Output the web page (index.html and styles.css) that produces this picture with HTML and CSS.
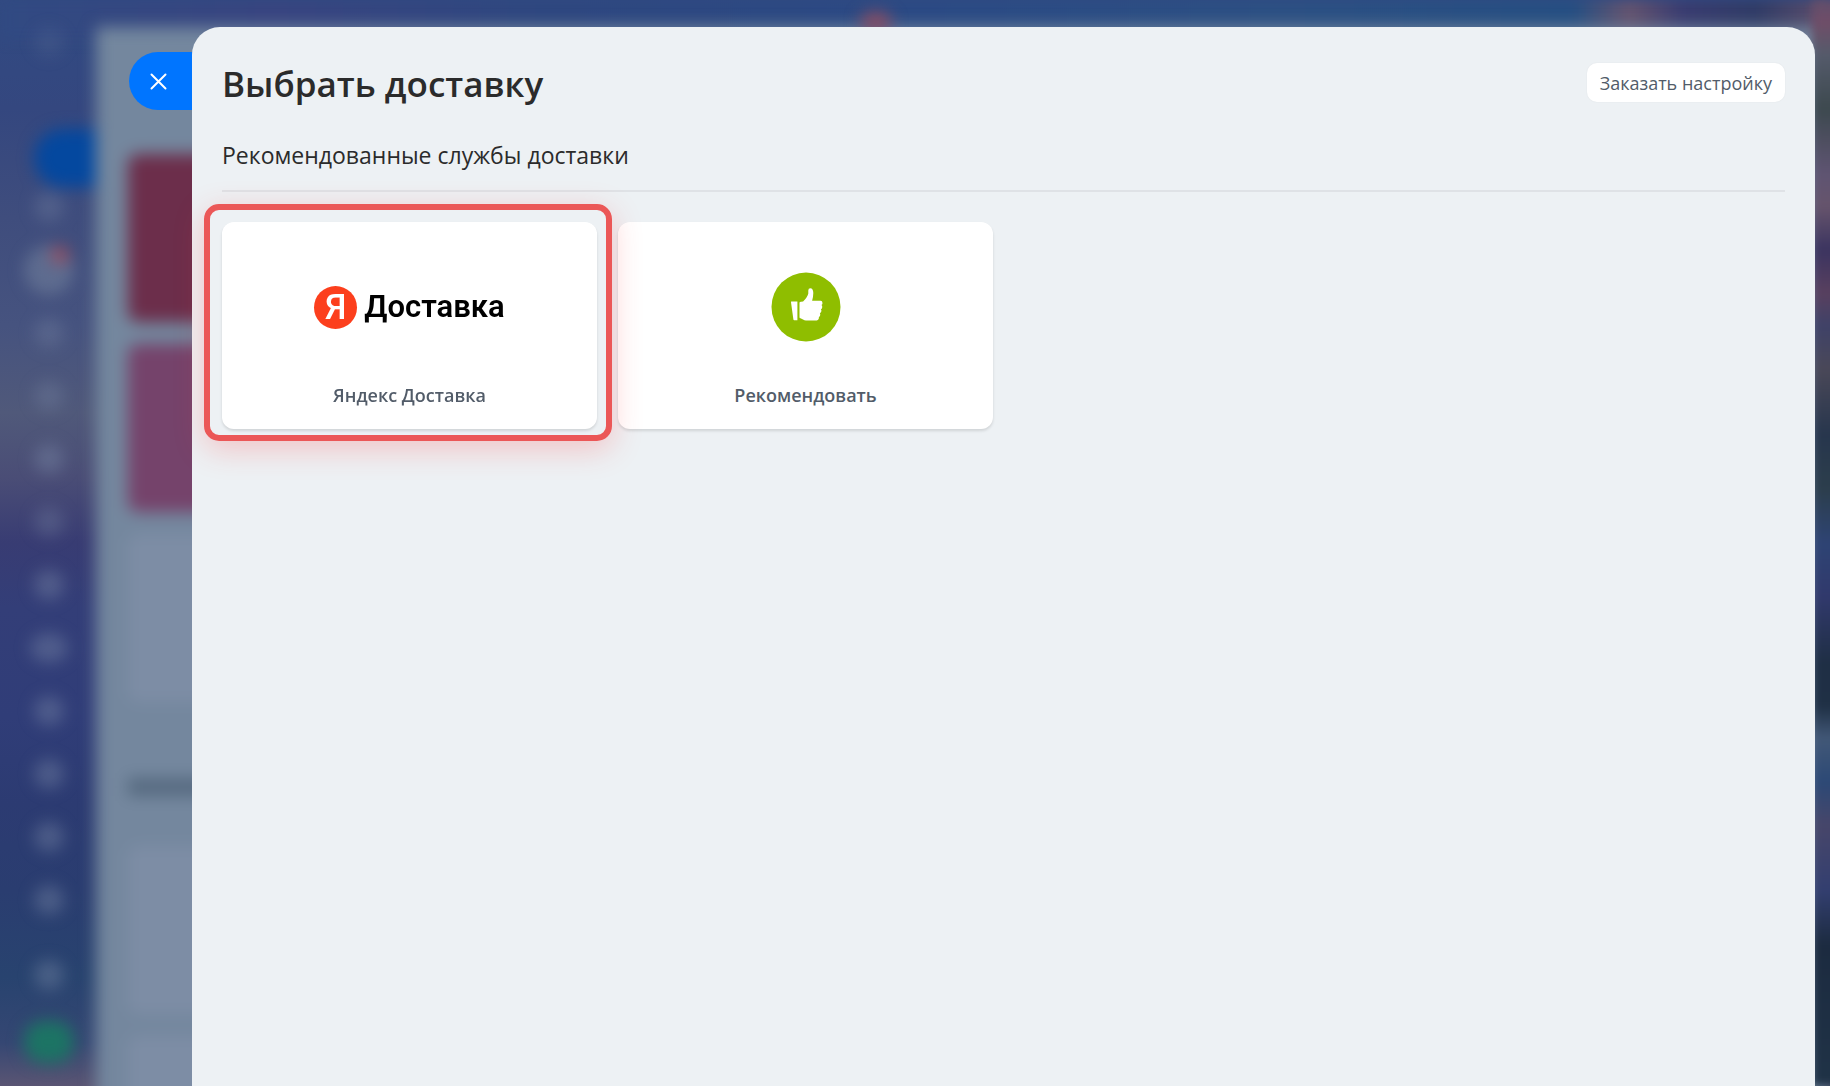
FILE: index.html
```html
<!DOCTYPE html>
<html lang="ru">
<head>
  <meta charset="UTF-8">
  <meta name="viewport" content="width=device-width, initial-scale=1.0">
  <title>Выбрать доставку</title>
  <link rel="stylesheet" href="styles.css">
</head>
<body>
  <div class="backdrop" aria-hidden="true">
    <div class="edge-top"></div>
    <div class="backdrop-content">
      <div class="sidebar">
        <div class="menu-icon menu-logo"><i></i></div>
        <div class="menu-tab"></div>
        <div class="menu-icon faint"><i></i></div>
        <div class="menu-icon active"><i></i></div>
        <div class="menu-icon faint"><i></i></div>
        <div class="menu-icon faint"><i></i></div>
        <div class="menu-icon"><i></i></div>
        <div class="menu-icon faint"><i></i></div>
        <div class="menu-icon"><i></i></div>
        <div class="menu-icon wide"><i></i></div>
        <div class="menu-icon"><i></i></div>
        <div class="menu-icon"><i></i></div>
        <div class="menu-icon"><i></i></div>
        <div class="menu-icon"><i></i></div>
        <div class="menu-icon last"><i></i></div>
        <div class="menu-add"></div>
      </div>
      <div class="under-page">
        <div class="tile tile-red"></div>
        <div class="tile tile-pink"></div>
        <div class="tile"></div>
        <div class="tile-heading"></div>
        <div class="tile"></div>
        <div class="tile"></div>
      </div>
    </div>
    <div class="edge-badge"></div>
    <div class="edge-right"></div>
  </div>

  <main class="slider">
    <button class="close-btn" type="button" aria-label="Закрыть">
      <svg width="17" height="17" viewBox="0 0 17 17" fill="none" stroke="#fff" stroke-width="2" stroke-linecap="round">
        <path d="M1.500 1.500l14 14M15.500 1.500l-14 14"/>
      </svg>
    </button>

    <header class="slider-header">
      <h1>Выбрать доставку</h1>
      <button class="order-btn" type="button">Заказать настройку</button>
    </header>

    <h2>Рекомендованные службы доставки</h2>

    <div class="cards">
      <button class="card selected" type="button">
        <span class="card-logo">
          <span class="ya-circle">Я</span>
          <span class="ya-text">Доставка</span>
        </span>
        <span class="card-title">Яндекс Доставка</span>
      </button>
      <button class="card" type="button">
        <span class="card-logo">
          <svg width="70" height="70" viewBox="0 0 70 70">
            <circle cx="35" cy="35" r="34.5" fill="#8fbe00"/>
            <path fill="#fff" d="M20.200 29.500h6.200v18.800h-3.200q-.7 0-.8-.8l-2.400-17.200q0-.8.2-.8z"/>
            <path fill="#fff" d="M28.500 30.800q0-.8 1.600-1l2-.2q4.500-4.500 5.200-8.100V18.500q0-2.200 2-2.300 2.900.2 3 4.800 0 3.800-1.200 7.700h8.500q1.800.1 1.900 2.200 0 1.500-1 2.100 1 1 .7 2.400-.3 1.500-1.300 1.900.8.900.4 2.300-.4 1.300-1.400 1.700.6.900.2 2.200-.4 1.100-1.200 1.500.3 3-2.200 3.400H35q-1.500 0-3-1l-2-.9q-1.500-.3-1.500-1z"/>
          </svg>
        </span>
        <span class="card-title">Рекомендовать</span>
      </button>
    </div>
  </main>
</body>
</html>
```
FILE: styles.css
```css
* {
  box-sizing: border-box;
}

body {
  margin: 0;
  min-height: 100vh;
  font-family: "Open Sans", "Noto Sans", sans-serif;
  background-color: #2f427a;
  color: #2b2b2b;
}

button {
  font-family: inherit;
  border: none;
  cursor: pointer;
}

/* Blurred page under the slider */
.backdrop {
  position: fixed;
  inset: 0;
  overflow: hidden;
  background: linear-gradient(to bottom, #314a82 0%, #34477f 10%, #3f4d7d 20%, #46537f 30%, #50597a 38%, #4a4d76 44%, #383c73 50%, #333e78 56%, #303d78 66%, #2c3b72 74%, #2a3d70 82%, #28436f 90%, #354773 96%, #5a5573 100%);
}

.edge-top {
  position: absolute;
  inset: 0 0 auto 0;
  height: 40px;
  background: linear-gradient(to right, #314a82 0%, #384580 15%, #2e477f 30%, #2b4a84 50%, #2c5083 70%, #264f82 86%, #65546f 89%, #393c70 92%, #303c66 96%, #604f6c 100%);
  filter: blur(6px);
}

.edge-badge {
  position: absolute;
  top: 12px;
  left: 47%;
  width: 32px;
  height: 20px;
  border-radius: 50%;
  background-color: #8a4c62;
  filter: blur(8px);
}

.edge-right {
  position: absolute;
  inset: 0 -10px 0 auto;
  width: 28px;
  background: linear-gradient(to bottom, #604f6c 0%, #704d68 2%, #555b6b 5%, #3d494f 10%, #5f5472 16%, #66546c 19%, #3b3460 23%, #59405f 27%, #3f4268 30%, #4a4858 34%, #27364d 40%, #2c3e4c 45%, #2e4474 50%, #31396c 55%, #1f2f45 61%, #1f3045 65%, #425877 68%, #2c4976 72%, #47466a 76%, #333f70 82%, #1c2b40 87%, #203347 100%);
  filter: blur(4px);
}

.backdrop-content {
  display: flex;
  min-height: 1126px;
  filter: blur(8px);
}

.sidebar {
  display: flex;
  flex-direction: column;
  flex: none;
  align-items: center;
  width: 96px;
  padding: 10px 0 0 2px;
}

.menu-icon {
  display: flex;
  flex: none;
  align-items: center;
  justify-content: center;
  width: 52px;
  height: 63px;
}

.menu-icon i {
  width: 30px;
  height: 30px;
  border-radius: 50%;
  background-color: rgba(125, 140, 170, 0.4);
}

.menu-icon.faint i {
  background-color: rgba(125, 140, 170, 0.3);
}

.menu-icon.menu-logo i {
  background-color: rgba(125, 140, 170, 0.15);
}

.menu-icon.wide i {
  width: 38px;
}

.menu-icon.active {
  position: relative;
}

.menu-icon.active i {
  width: 50px;
  height: 50px;
  background-color: rgba(135, 150, 170, 0.4);
}

.menu-icon.active::after {
  content: "";
  position: absolute;
  top: 8px;
  right: 6px;
  width: 18px;
  height: 18px;
  border-radius: 50%;
  background-color: #964e60;
}

.menu-tab {
  flex: none;
  align-self: flex-end;
  width: 62px;
  height: 58px;
  margin: 56px 0 -12px;
  border-radius: 29px 0 0 29px;
  background-color: #04489f;
}

.menu-icon.last {
  margin-top: 12px;
}

.menu-add {
  flex: none;
  width: 50px;
  height: 42px;
  margin-top: 15px;
  border-radius: 20px;
  background-color: #1c7464;
}

.under-page {
  display: flex;
  flex-direction: column;
  flex: 1;
  gap: 22px;
  margin-top: 27px;
  padding: 127px 32px 0;
  background-color: #74879e;
}

.tile {
  flex: none;
  height: 168px;
  border-radius: 10px;
  background-color: #7d8da5;
}

.tile-red {
  background-color: #6c2e4b;
}

.tile-pink {
  background-color: #75436b;
}

.tile-heading {
  flex: none;
  width: 160px;
  height: 18px;
  margin: 54px 0 28px;
  background-color: #566a80;
}

/* Slider */
.slider {
  position: relative;
  min-height: calc(100vh - 27px);
  margin: 27px 15px 0 192px;
  padding: 36px 30px 30px;
  border-radius: 28px 28px 0 0;
  background-color: #edf1f4;
}

body::before {
  content: "";
  display: table;
}

.close-btn {
  display: flex;
  position: absolute;
  top: 25px;
  right: 100%;
  align-items: center;
  width: 63px;
  height: 58px;
  padding: 0 0 0 21px;
  border-radius: 29px 0 0 29px;
  background-color: #0075ff;
}

.slider-header {
  display: flex;
  align-items: flex-start;
  justify-content: space-between;
}

h1 {
  margin: 0;
  font-size: 35px;
  font-weight: 600;
  line-height: 42px;
}

.order-btn {
  height: 39px;
  padding: 0 13px;
  border-radius: 10px;
  background-color: #fff;
  box-shadow: 0 0 2px rgba(0, 0, 0, 0.06);
  color: #525c69;
  font-size: 18px;
}

h2 {
  margin: 34px 0 30px;
  padding-bottom: 19px;
  border-bottom: 2px solid #dfe2e6;
  font-size: 23px;
  font-weight: 400;
  line-height: 32px;
}

.cards {
  display: grid;
  grid-template-columns: repeat(4, 1fr);
  gap: 21px;
}

.card {
  display: flex;
  flex-direction: column;
  align-items: center;
  height: 207px;
  padding: 50px 15px 20px;
  border-radius: 12px;
  background-color: #fff;
  box-shadow: 0 2px 3px rgba(0, 0, 0, 0.12);
}

.card-logo {
  display: flex;
  align-items: center;
  gap: 7px;
  height: 70px;
}

.card-title {
  margin-top: 40px;
  color: #525c69;
  font-size: 18px;
  font-weight: 600;
  line-height: 26px;
}

.ya-circle {
  width: 43px;
  height: 43px;
  border-radius: 50%;
  background-color: #fc3f1d;
  color: #fff;
  font-family: Roboto, sans-serif;
  font-size: 35px;
  font-weight: 500;
  line-height: 43px;
}

.ya-text {
  color: #000;
  font-family: Roboto, sans-serif;
  font-size: 31px;
  font-weight: 600;
  line-height: 42px;
}

.card.selected {
  position: relative;
  z-index: 1;
}

.card.selected::after {
  content: "";
  position: absolute;
  inset: -18px -15px -12px -18px;
  border: 6px solid #eb5757;
  border-radius: 15px;
  box-shadow: 0 8px 30px rgba(255, 60, 60, 0.25);
}
```
